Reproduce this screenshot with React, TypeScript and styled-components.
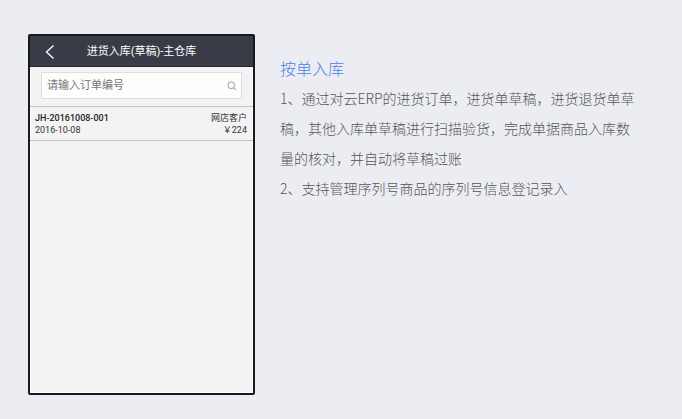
import React from "react";
import styled, { createGlobalStyle } from "styled-components";

const GlobalStyle = createGlobalStyle`
  * {
    box-sizing: border-box;
  }
  body {
    margin: 0;
    background: #ecedf3;
    font-family: Roboto, "Noto Sans CJK SC", sans-serif;
  }
`;

const Page = styled.main`
  display: flex;
  align-items: flex-start;
  gap: 25px;
  padding: 34px 44px 24px 28px;
`;

const Phone = styled.section`
  display: flex;
  flex-direction: column;
  flex: 0 0 227px;
  min-height: 361px;
  border: 2px solid #17191d;
  border-radius: 2px;
  background: #f3f3f3;
  box-shadow: inset 0 0 0 1px #ffffff;
`;

const TitleBar = styled.header`
  display: grid;
  grid-template-columns: 40px 1fr 40px;
  align-items: center;
  height: 31px;
  padding-top: 2px;
  border-bottom: 1px solid #24262d;
  background: #393c47;
  color: #ffffff;
`;

const BackButton = styled.button`
  display: flex;
  justify-content: center;
  padding: 0;
  border: 0;
  background: none;
  color: inherit;
`;

const ScreenTitle = styled.h1`
  margin: 0;
  font-size: 11px;
  line-height: 16px;
  font-weight: 400;
  text-align: center;
  white-space: nowrap;
`;

const SearchBox = styled.form`
  display: flex;
  align-items: center;
  height: 27px;
  margin: 5px 11px 7px;
  padding: 0 4px 0 5px;
  border: 1px solid #dedede;
  background: #fdfdfd;
`;

const SearchInput = styled.input`
  flex: 1;
  min-width: 0;
  padding: 0;
  border: 0;
  outline: 0;
  background: none;
  color: #333333;
  font-family: inherit;
  font-size: 11px;
  line-height: 16px;
  &::placeholder {
    color: #777777;
    opacity: 1;
  }
`;

const SearchButton = styled.button`
  display: flex;
  padding: 0;
  border: 0;
  background: none;
  color: #999999;
`;

const Orders = styled.ul`
  margin: 0;
  padding: 0;
  list-style: none;
`;

const Order = styled.li`
  display: flex;
  justify-content: space-between;
  padding: 5px 6px 4px 5px;
  border-top: 1px solid #c4c4c4;
  border-bottom: 1px solid #c4c4c4;
  color: #333333;
  font-size: 9px;
  line-height: 12px;
`;

const OrderColumn = styled.div<{ $end?: boolean }>`
  display: flex;
  flex-direction: column;
  text-align: ${(p) => (p.$end ? "right" : "left")};
`;

const OrderNumber = styled.strong`
  color: #222222;
  font-size: 9px;
  font-weight: 500;
`;

const Description = styled.article`
  flex: 1;
  min-width: 0;
  padding-top: 19px;
  font-family: "Noto Sans CJK SC", sans-serif;
  font-weight: 300;
  line-height: 30px;
`;

const Heading = styled.h2`
  margin: 0;
  color: #4a80e8;
  font-size: 16px;
  font-weight: 300;
`;

const Paragraph = styled.p`
  margin: 0;
  color: #555555;
  font-size: 14px;
`;

export default function App() {
  return (
    <>
      <GlobalStyle />
      <Page>
        <Phone>
          <TitleBar>
            <BackButton type="button" aria-label="返回">
              <svg width="10" height="16" viewBox="0 0 10 16" fill="none" stroke="currentColor" strokeWidth="1.3">
                <path d="M8.5 1.5 1.5 8l7 6.5" />
              </svg>
            </BackButton>
            <ScreenTitle>进货入库(草稿)-主仓库</ScreenTitle>
          </TitleBar>
          <SearchBox>
            <SearchInput type="text" aria-label="订单编号" placeholder="请输入订单编号" />
            <SearchButton type="button" aria-label="搜索">
              <svg width="10" height="10" viewBox="0 0 10 10" fill="none" stroke="currentColor">
                <circle cx="4.3" cy="4.3" r="3.4" />
                <path d="m6.8 6.8 2.4 2.4" />
              </svg>
            </SearchButton>
          </SearchBox>
          <Orders>
            <Order>
              <OrderColumn>
                <OrderNumber>JH-20161008-001</OrderNumber>
                <time dateTime="2016-10-08">2016-10-08</time>
              </OrderColumn>
              <OrderColumn $end>
                <span>网店客户</span>
                <span>￥224</span>
              </OrderColumn>
            </Order>
          </Orders>
        </Phone>
        <Description>
          <Heading>按单入库</Heading>
          <Paragraph>
            1、通过对云ERP的进货订单，进货单草稿，进货退货单草稿，其他入库单草稿进行扫描验货，完成单据商品入库数量的核对，并自动将草稿过账
          </Paragraph>
          <Paragraph>2、支持管理序列号商品的序列号信息登记录入</Paragraph>
        </Description>
      </Page>
    </>
  );
}
